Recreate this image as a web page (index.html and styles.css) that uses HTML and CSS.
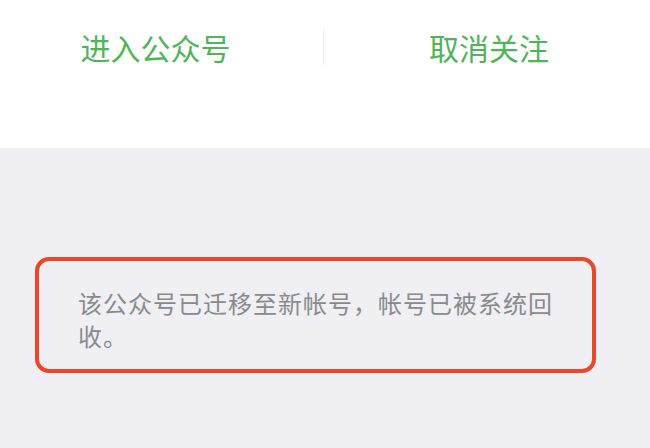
FILE: index.html
```html
<!DOCTYPE html>
<html lang="zh">
<head>
<meta charset="utf-8">
<link rel="stylesheet" href="styles.css">
</head>
<body>
<div class="top">
  <div class="actions">
    <div class="action action-left">进入公众号</div>
    <div class="divider"></div>
    <div class="action action-right">取消关注</div>
  </div>
</div>
<div class="content">
  <div class="notice">该公众号已迁移至新帐号，帐号已被系统回收。</div>
</div>
</body>
</html>
```
FILE: styles.css
```css
html, body {
  margin: 0;
  padding: 0;
}
body {
  width: 650px;
  height: 448px;
  overflow: hidden;
  background: #efeff4;
  font-family: "Noto Sans CJK SC", "Noto Sans", sans-serif;
}
.top {
  background: #ffffff;
  height: 148px;
}
.actions {
  display: flex;
  align-items: center;
  height: 94px;
}
.action {
  box-sizing: border-box;
  text-align: center;
  color: #50b558;
  font-size: 30px;
  line-height: 40px;
}
.action-left {
  width: 323px;
  padding-right: 12px;
}
.action-right {
  flex: 1;
  padding-left: 4px;
}
.divider {
  width: 1px;
  height: 36px;
  background: #f0f0f0;
}
.content {
  padding-top: 109px;
  padding-left: 35px;
}
.notice {
  box-sizing: border-box;
  width: 561px;
  border: 4px solid #e9482b;
  border-radius: 14px;
  padding: 25px 36px 17px 39px;
  color: #8a8a8c;
  font-size: 24px;
  letter-spacing: 1px;
  line-height: 33px;
}
```
